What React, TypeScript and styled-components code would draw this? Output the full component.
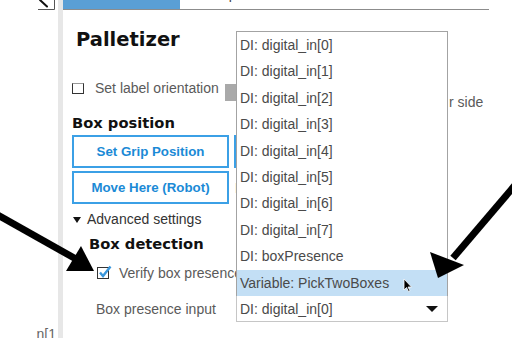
import React, { FC } from 'react';
import styled, { createGlobalStyle } from 'styled-components';

const GlobalStyle = createGlobalStyle`
    html, body {
        margin: 0;
        padding: 0;
        background: #ffffff;
    }
    * {
        box-sizing: border-box;
    }
`;

const BODY_FONT = `'Liberation Sans', Arial, sans-serif`;
const HEAD_FONT = `'DejaVu Sans', 'Noto Sans', sans-serif`;

const Page = styled.div`
    position: relative;
    display: flex;
    width: 512px;
    height: 338px;
    overflow: hidden;
    background: #fff;
    font-family: ${BODY_FONT};
`;

const Gutter = styled.div`
    width: 58px;
    flex-shrink: 0;
    display: flex;
    flex-direction: column;
    justify-content: space-between;
    overflow: hidden;
`;

const GutterText = styled.div`
    font-size: 14px;
    line-height: 16px;
    color: #666;
    text-align: right;
    padding-right: 2px;
    margin-bottom: -4px;
`;

const ScrollStrip = styled.div`
    width: 5px;
    flex-shrink: 0;
    background: #e7e7e7;
`;

const Main = styled.div`
    flex: 1;
    display: flex;
    flex-direction: column;
    min-width: 0;
`;

const TabBar = styled.div`
    display: flex;
    height: 10px;
    margin-right: 23px;
    border-bottom: 1px solid #8c8c8c;
    overflow: hidden;
`;

const ActiveTab = styled.div`
    width: 117px;
    height: 9px;
    background: #5a9fd5;
`;

const Tab = styled.div`
    margin-left: 20px;
    font-size: 14px;
    line-height: 16px;
    margin-top: -14px;
    color: #444;
`;

const Content = styled.div`
    display: flex;
    flex-direction: column;
    padding-left: 9px;
`;

const Title = styled.h1`
    margin: 18px 0 0 4px;
    font-family: ${HEAD_FONT};
    font-weight: bold;
    font-size: 19.5px;
    line-height: 24px;
    color: #111;
`;

const Heading = styled.h2<{ $indent?: number; $top: number }>`
    margin: ${p => p.$top}px 0 0 ${p => p.$indent ?? 0}px;
    font-family: ${HEAD_FONT};
    font-weight: bold;
    font-size: 14.7px;
    line-height: 18px;
    color: #111;
`;

const Row = styled.div<{ $top: number; $h: number }>`
    display: flex;
    align-items: flex-start;
    margin-top: ${p => p.$top}px;
    height: ${p => p.$h}px;
`;

const Check = styled.div<{ $checked?: boolean }>`
    position: relative;
    width: 12px;
    height: ${p => (p.$checked ? 12 : 11)}px;
    margin-top: ${p => (p.$checked ? 2 : 3)}px;
    border: 1.5px solid #333;
    border-top-color: ${p => (p.$checked ? '#333' : '#999')};
    background: #fff;
    flex-shrink: 0;
`;

const Label = styled.span<{ $w?: number; $gap: number; $dark?: boolean }>`
    display: block;
    margin-left: ${p => p.$gap}px;
    width: ${p => (p.$w ? `${p.$w}px` : 'auto')};
    font-size: 14px;
    line-height: 16px;
    color: ${p => (p.$dark ? '#333' : '#5a5a5a')};
    white-space: nowrap;
    flex-shrink: 0;
`;

const GrayDrop = styled.div`
    width: 223px;
    height: 17px;
    margin-top: 4px;
    background: #a9a9a9;
    flex-shrink: 0;
`;

const SideText = styled.span`
    margin-top: 14px;
    margin-left: 1px;
    font-size: 14px;
    line-height: 16px;
    color: #5a5a5a;
    white-space: nowrap;
`;

const ButtonRow = styled.div<{ $top: number }>`
    display: flex;
    align-items: center;
    gap: 5px;
    margin-top: ${p => p.$top}px;
`;

const ActionButton = styled.button`
    width: 157px;
    height: 33px;
    padding: 0;
    border: 2px solid #3ba0e6;
    background: #fff;
    color: #1b8ad6;
    font-family: ${BODY_FONT};
    font-weight: bold;
    font-size: 13.3px;
    flex-shrink: 0;
`;

const Toggle = styled.div`
    display: flex;
    align-items: center;
    margin-top: 7px;
    margin-left: 1px;
    height: 16px;
`;

const Caret = styled.span`
    width: 0;
    height: 0;
    border-left: 4.5px solid transparent;
    border-right: 4.5px solid transparent;
    border-top: 6px solid #111;
    margin-top: 1px;
`;

const CheckMark = styled.svg`
    position: absolute;
    left: 0px;
    top: -3px;
`;

const FormRow = styled.div`
    display: flex;
    align-items: center;
    margin-top: 14px;
    height: 27px;
`;

const Combo = styled.div`
    position: relative;
    width: 212px;
    height: 27px;
    display: flex;
    align-items: center;
    justify-content: space-between;
    padding: 0 9px 0 3px;
    border: 1px solid #c6c6c6;
    border-top-color: #1c2b3a;
    font-size: 14px;
    color: #4a4a4a;
    flex-shrink: 0;
`;

const ComboArrow = styled.span`
    width: 0;
    height: 0;
    border-left: 6.5px solid transparent;
    border-right: 6.5px solid transparent;
    border-top: 6px solid #111;
`;

const Popup = styled.ul`
    position: absolute;
    left: -1px;
    bottom: 100%;
    width: 212px;
    margin: 0;
    padding: 0;
    list-style: none;
    background: #fff;
    border: 1px solid #a3a3a3;
    border-bottom: none;
    z-index: 2;
`;

const Option = styled.li<{ $active?: boolean }>`
    height: 26.4px;
    line-height: 26.4px;
    padding-left: 3px;
    font-size: 14px;
    color: #4a4a4a;
    background: ${p => (p.$active ? '#c3dff5' : '#fff')};
    white-space: nowrap;
`;

const Overlay = styled.svg`
    position: absolute;
    left: 0;
    top: 0;
    pointer-events: none;
    z-index: 5;
`;

const options = [
    'DI: digital_in[0]',
    'DI: digital_in[1]',
    'DI: digital_in[2]',
    'DI: digital_in[3]',
    'DI: digital_in[4]',
    'DI: digital_in[5]',
    'DI: digital_in[6]',
    'DI: digital_in[7]',
    'DI: boxPresence',
    'Variable: PickTwoBoxes',
];

const App: FC = () => {
    const selected = 'Variable: PickTwoBoxes';

    return (
        <Page>
            <GlobalStyle />
            <Gutter>
                <svg width="58" height="12" viewBox="0 0 58 12">
                    {/* search button corner */}
                    <path d="M38 9.5 H54.5 V0" fill="none" stroke="#555" strokeWidth="1" />
                    <path d="M40 0 L47 6.5" stroke="#111" strokeWidth="2" strokeLinecap="round" />
                </svg>
                <GutterText>n[1</GutterText>
            </Gutter>
            <ScrollStrip />
            <Main>
                <TabBar>
                    <ActiveTab />
                    <Tab>Setup</Tab>
                </TabBar>
                <Content>
                    <Title>Palletizer</Title>

                    <Row $top={28} $h={30}>
                        <Check />
                        <Label $gap={11} $w={130}>Set label orientation</Label>
                        <GrayDrop />
                        <SideText>r side</SideText>
                    </Row>

                    <Heading $top={4}>Box position</Heading>
                    <ButtonRow $top={3}>
                        <ActionButton>Set Grip Position</ActionButton>
                        <ActionButton>Set Approach</ActionButton>
                    </ButtonRow>
                    <ButtonRow $top={3}>
                        <ActionButton>Move Here (Robot)</ActionButton>
                        <Label $gap={1}>Freedrive</Label>
                    </ButtonRow>

                    <Toggle>
                        <Caret />
                        <Label $gap={6} $dark>Advanced settings</Label>
                    </Toggle>

                    <Heading $top={8} $indent={17}>Box detection</Heading>

                    <Row $top={12} $h={16}>
                        <span style={{ width: 25 }} />
                        <Check $checked>
                            <CheckMark width="14" height="14" viewBox="0 0 14 14">
                                <path d="M2 7.5 L5 11 L12.5 1.5" fill="none" stroke="#3a97dc" strokeWidth="2.4" />
                            </CheckMark>
                        </Check>
                        <Label $gap={10}>Verify box presence</Label>
                    </Row>

                    <FormRow>
                        <Label $gap={24} $w={140}>Box presence input</Label>
                        <Combo>
                            <span>DI: digital_in[0]</span>
                            <ComboArrow />
                            <Popup>
                                {options.map(opt => (
                                    <Option key={opt} $active={opt === selected}>
                                        {opt}
                                    </Option>
                                ))}
                            </Popup>
                        </Combo>
                    </FormRow>
                </Content>
            </Main>

            <Overlay width="512" height="338" viewBox="0 0 512 338">
                {/* left arrow */}
                <line x1="-4" y1="214" x2="76" y2="259" stroke="#000" strokeWidth="7" />
                <polygon points="94,271 81,246 66,271" fill="#000" />
                {/* right arrow */}
                <line x1="516" y1="184" x2="453" y2="258" stroke="#000" strokeWidth="7" />
                <polygon points="438,278 430,252 464,265" fill="#000" />
                {/* mouse pointer */}
                <path
                    d="M404 279 L404 290 L406.5 287.5 L408.5 291.5 L410 290.8 L408 287 L411.5 287 Z"
                    fill="#000"
                    stroke="#fff"
                    strokeWidth="0.8"
                />
            </Overlay>
        </Page>
    );
};

export default App;
